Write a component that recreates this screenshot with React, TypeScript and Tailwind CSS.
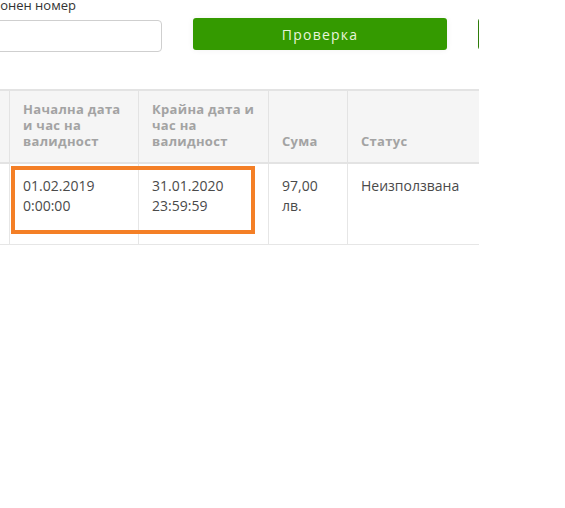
import React from 'react';

const headers = [
  { label: '', width: 'w-[120px]' },
  { label: 'Начална дата и час на валидност', width: 'w-[129px]' },
  { label: 'Крайна дата и час на валидност', width: 'w-[130px]' },
  { label: 'Сума', width: 'w-[79px]' },
  { label: 'Статус', width: 'w-[150px]' },
  { label: '', width: 'w-[120px]' },
];

const row = ['', '01.02.2019 0:00:00', '31.01.2020 23:59:59', '97,00 лв.', 'Неизползвана', ''];

const App: React.FC = () => {
  return (
    <div className="min-h-[508px] w-[565px] bg-white" style={{ fontFamily: '"Open Sans", "Noto Sans", sans-serif' }}>
      <div className="relative w-[479px] overflow-hidden">
        {/* Search form */}
        <div className="-mt-[3px] ml-[-140px] flex items-start gap-[31px]">
          <div className="w-[302px] shrink-0">
            <label className="ml-[45px] block whitespace-nowrap text-[13px] leading-4 text-[#333]">Идентификационен номер</label>
            <input className="mt-[7px] h-[32px] w-[302px] rounded-[4px] border border-[#cfcfcf] px-3 text-sm outline-none" />
          </div>
          <button className="mt-[21px] h-[32px] w-[254px] shrink-0 rounded-[3px] bg-[#349a00] text-[14px] tracking-[1.2px] text-[#e8f5dc] shadow-[0_0_6px_rgba(0,0,0,0.06)]">
            Проверка
          </button>
          <button aria-label="Назад" className="mt-[21px] h-[32px] w-[200px] shrink-0 rounded-[3px] border border-[#2f7d0a] bg-white" />
        </div>

        {/* Results table */}
        <table className="ml-[-111px] mt-[37px] w-[728px] table-fixed border-collapse">
          <colgroup>
            {headers.map((h, i) => (
              <col key={i} className={h.width} />
            ))}
          </colgroup>
          <thead>
            <tr className="border-y-2 border-[#e3e3e3] bg-[#f5f5f5]">
              {headers.map((h, i) => (
                <th
                  key={i}
                  className="h-[72px] border-x border-[#e3e3e3] pb-[13px] pl-[13px] pr-[11px] pt-[10px] text-left align-bottom text-[13px] font-bold leading-4 tracking-[0.3px] text-[#a3a3a3]"
                >
                  {h.label}
                </th>
              ))}
            </tr>
          </thead>
          <tbody>
            <tr className="border-b border-[#e6e6e6]">
              {row.map((c, i) => (
                <td
                  key={i}
                  className="h-[81px] border-x border-[#e6e6e6] pl-[13px] pr-[11px] pt-[12px] align-top text-[14px] leading-5 text-[#4a4a4a]"
                >
                  {c}
                </td>
              ))}
            </tr>
          </tbody>
        </table>

        {/* Highlight around the validity dates */}
        <div className="absolute left-[11px] top-[166px] h-[68px] w-[244px] border-4 border-[#f47f26]" />
      </div>
    </div>
  );
};

export default App;
